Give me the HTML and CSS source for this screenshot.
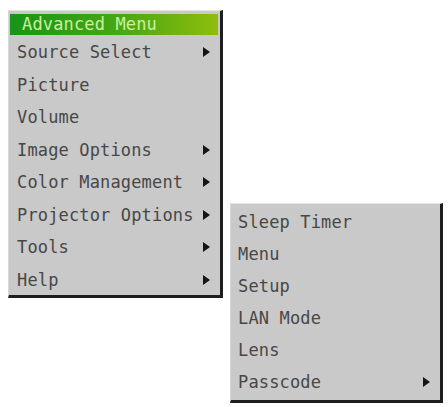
FILE: index.html
```html
<!DOCTYPE html>
<html lang="en">
<head>
    <meta charset="UTF-8">
    <meta name="viewport" content="width=device-width, initial-scale=1.0">
    <title>Advanced Menu</title>
    <link rel="stylesheet" href="styles.css">
</head>
<body>

    <div class="osd">
        <div class="menu main-menu">
            <div class="menu-title">Advanced Menu</div>
            <ul class="items">
                <li class="item has-sub">Source Select</li>
                <li class="item">Picture</li>
                <li class="item">Volume</li>
                <li class="item has-sub">Image Options</li>
                <li class="item has-sub">Color Management</li>
                <li class="item has-sub">Projector Options</li>
                <li class="item has-sub">Tools</li>
                <li class="item has-sub">Help</li>
            </ul>
        </div>

        <div class="menu sub-menu">
            <ul class="items">
                <li class="item">Sleep Timer</li>
                <li class="item">Menu</li>
                <li class="item">Setup</li>
                <li class="item">LAN Mode</li>
                <li class="item">Lens</li>
                <li class="item has-sub">Passcode</li>
            </ul>
        </div>
    </div>

</body>
</html>
```

FILE: styles.css
```css
body {
    margin: 0;
    padding: 10px 0 0 8px;
    background: #ffffff;
    font-family: "DejaVu Sans Mono", "Liberation Mono", monospace;
}
.osd {
    display: flex;
    align-items: flex-start;
    gap: 7px;
}
.menu {
    box-sizing: border-box;
    background: #c9c9c9;
    border-top: 1px solid #e4e4e4;
    border-left: 1px solid #d8d8d8;
    border-right: 3px solid #1e1e1e;
    border-bottom: 3px solid #1e1e1e;
}
.main-menu {
    width: 215px;
    padding: 3px 2px 0 1px;
}
.sub-menu {
    width: 213px;
    margin-top: 193px;
    padding: 2px 2px 2px 1px;
}
.menu-title {
    height: 21px;
    line-height: 21px;
    padding-left: 12px;
    background: linear-gradient(to right, #189418, #4aa812 55%, #8fbd0c);
    color: #c8f2a0;
    font-size: 17px;
    letter-spacing: 0.15px;
}
.items {
    list-style: none;
    margin: 0;
    padding: 0;
}
.item {
    display: flex;
    justify-content: space-between;
    align-items: center;
    box-sizing: border-box;
    height: 32.5px;
    padding: 2px 8px 0 7px;
    color: #474747;
    font-size: 17px;
    letter-spacing: 0.15px;
}
.sub-menu .item {
    height: 32px;
    padding: 0 8px 0 6px;
}
/* submenu arrow */
.has-sub::after {
    content: "";
    border-left: 7px solid #151515;
    border-top: 5px solid transparent;
    border-bottom: 5px solid transparent;
}
```
